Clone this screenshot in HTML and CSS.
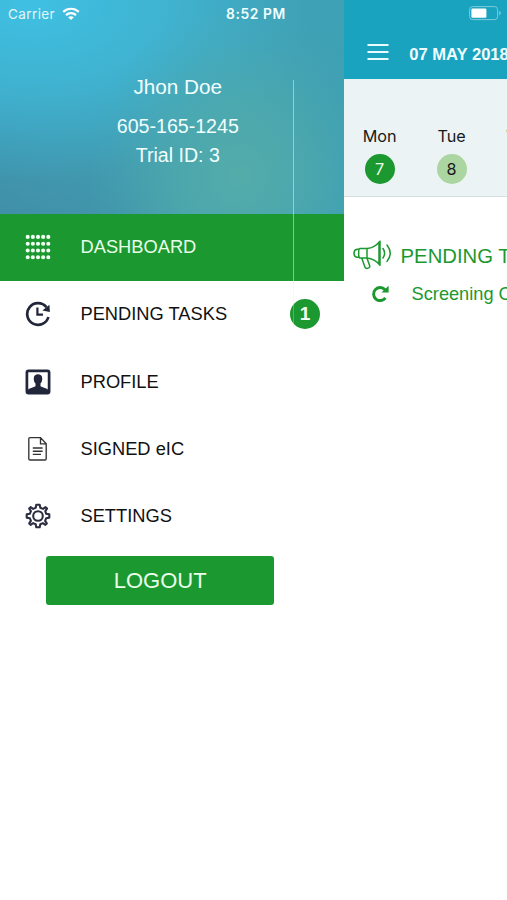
FILE: index.html
```html
<!DOCTYPE html>
<html lang="en">
<head>
<meta charset="utf-8">
<title>Dashboard</title>
<link rel="stylesheet" href="styles.css">
</head>
<body>
<div class="app">
  <aside class="drawer">
    <header class="profile">
      <div class="status">
        <span class="carrier">Carrier</span>
        <svg class="wifi" width="18" height="14" viewBox="0 0 18 14" fill="none" stroke="#fff" stroke-width="2.2"><path d="M1.2 4.9C5.6.7 12.4.7 16.8 4.9M4 8.1C6.8 5.4 11.2 5.4 14 8.1"/><path d="M9 13 6.2 10.2C7.8 8.8 10.2 8.8 11.8 10.2Z" fill="#fff" stroke="none"/></svg>
        <span class="clock">8:52 PM</span>
      </div>
      <div class="name">Jhon Doe</div>
      <div class="phone">605-165-1245</div>
      <div class="trial">Trial ID: 3</div>
    </header>
    <nav class="menu">
      <a class="item active"><svg class="icon" width="26" height="26" viewBox="0 0 26 26" fill="none" stroke="#f4fff4" stroke-width="4.1" stroke-linecap="round" stroke-dasharray="0 5.15"><path d="M2.7 2.9H24M2.7 9.7H24M2.7 16.5H24M2.7 23.3H24"/></svg><span>DASHBOARD</span></a>
      <a class="item"><svg class="icon" width="26" height="26" viewBox="0 0 26 26" fill="none" stroke="#22263a" stroke-width="2.7"><path d="M21.4 6.2A10.8 10.8 0 1 0 23.4 16"/><path d="M12.4 6.6V13.6H18" stroke-width="2.2"/><path d="M24.4 3.8 24.9 11 17.4 9.6Z" fill="#22263a" stroke="none"/></svg><span>PENDING TASKS</span><b class="badge">1</b></a>
      <a class="item"><svg class="icon" width="26" height="26" viewBox="0 0 26 26"><rect x="1.9" y="1.9" width="22.2" height="22.2" rx="1.6" fill="none" stroke="#22263a" stroke-width="2.7"/><path d="M3 23.5V20.5C5.2 19 8.6 18 10.5 17.2V14.6C8.8 12.8 8.7 10.7 8.8 8.9 8.9 6.5 10.6 5.2 13 5.2S17.1 6.5 17.2 8.9C17.3 10.7 17.2 12.8 15.5 14.6V17.2C17.4 18 20.8 19 23 20.5V23.5Z" fill="#22263a"/></svg><span>PROFILE</span></a>
      <a class="item"><svg class="icon" width="26" height="26" viewBox="0 0 26 26" fill="none" stroke="#333" stroke-width="1.35"><path d="M15.5 1.6H5Q3.8 1.6 3.8 2.8V22.8Q3.8 24 5 24H20Q21.2 24 21.2 22.8V7.8ZM15.5 1.6V7.8H21.2M7.8 12H17.6M7.8 15.2H17.6M7.8 18.4H16"/></svg><span>SIGNED eIC</span></a>
      <a class="item"><svg class="icon" width="26" height="26" viewBox="0 0 26 26" fill="none" stroke="#2b2e40" stroke-width="2.1" stroke-linejoin="round"><circle cx="13" cy="13" r="4.8"/><path d="M11.3 1.8H14.7L15.3 4.8 18 5.9 20.6 4.2 22 5.6 20.3 8.1 21.2 10.8 24.3 11.4V14.6L21.2 15.2 20.1 17.9 21.8 20.4 20.4 21.8 17.9 20.1 15.3 21.2 14.7 24.2H11.3L10.7 21.2 8.1 20.1 5.6 21.8 4.2 20.4 5.9 17.9 4.8 15.2 1.7 14.6V11.4L4.8 10.8 5.9 8.1 4.2 5.6 5.6 4.2 8.1 5.9 10.7 4.8Z"/></svg><span>SETTINGS</span></a>
    </nav>
    <button class="logout">LOGOUT</button>
    <i class="divider"></i>
  </aside>
  <main class="page">
    <header class="topbar">
      <svg class="battery" width="33" height="15" viewBox="0 0 33 15"><rect x=".6" y=".6" width="28" height="13" rx="3" fill="none" stroke="#7fcbdc"/><rect x="2.4" y="2.4" width="15" height="9.4" rx="1.2" fill="#fff"/><path d="M30.2 4.8Q33.6 7.1 30.2 9.4Z" fill="#7fcbdc"/></svg>
      <div class="titlebar">
        <svg width="22" height="18" viewBox="0 0 22 18" fill="none" stroke="#e8fbff" stroke-width="2"><path d="M.5 2H21.5M.5 9H21.5M.5 16H21.5"/></svg>
        <span>07 MAY 2018</span>
      </div>
    </header>
    <section class="week">
      <div class="day"><span>Mon</span><b class="today">7</b></div>
      <div class="day"><span>Tue</span><b>8</b></div>
      <div class="day"><span>Wed</span></div>
    </section>
    <section class="tasks">
      <h2><svg width="40" height="32" viewBox="0 0 40 32" fill="none" stroke="#1b982f" stroke-width="1.5" stroke-linejoin="round" stroke-linecap="round"><path d="M7 9.6H14C19.5 9 23.5 6.5 27 2.2V26.2C23.5 22 19.5 19.5 14 19H7C5.2 19 5.2 9.6 7 9.6ZM5.8 10.2H4Q1 10.8 1 14.2T4 18.2H5.8M8.8 19.2 12 28.2Q12.6 29.8 14.4 29.3L15.6 28.9Q17.2 28.3 16.6 26.5L14 19.2M14 9.8V19M26 4V24.4M30 9.5Q33.2 14.2 30 19M34 6Q40.5 14.2 34 22.4" /></svg><span>PENDING TASKS</span></h2>
      <div class="task"><svg width="19" height="18" viewBox="0 0 19 18"><path d="M14.4 12.8A6.5 6.5 0 1 1 14 4.8" fill="none" stroke="#1b982f" stroke-width="2.9"/><path d="M17.6.8V7.5H10.5Z" fill="#1b982f"/></svg><span>Screening Consent</span></div>
    </section>
  </main>
</div>
</body>
</html>
```
FILE: styles.css
```css
* { box-sizing: border-box; }
body { margin: 0; background: #fff; font-family: "Liberation Sans", Arial, sans-serif; overflow: hidden; }
.app { display: flex; width: 507px; height: 900px; overflow: hidden; }
svg { display: block; flex: none; }
.drawer { position: relative; width: 343.6px; flex: none; background: #fff; }
.profile {
  height: 213.5px; color: #f2ffff; text-align: center; padding-left: 12px;
  background:
    radial-gradient(ellipse 150px 170px at 240px 175px, #54acaa 0%, rgba(80,172,172,.7) 40%, rgba(75,170,178,.2) 80%, rgba(75,170,178,0) 100%),
    radial-gradient(ellipse 350px 220px at 30px 5px, #3fc0e3 0%, rgba(63,188,220,.75) 40%, rgba(63,180,205,.15) 80%, rgba(63,180,205,0) 100%),
    linear-gradient(90deg, #408ea6 0%, #4298ab 50%, #3e9fb2 100%);
}
.status { height: 28px; display: flex; align-items: center; margin-left: -12px; padding-left: 8px; font-family: Inter, sans-serif; }
.carrier { width: 54px; text-align: left; font-size: 13.5px; letter-spacing: .4px; opacity: .9; white-space: nowrap; }
.clock { margin-left: 146px; font-size: 13.8px; font-weight: 600; letter-spacing: .6px; white-space: nowrap; }
.wifi { margin-top: -1px; }
.name { margin-top: 46px; font-size: 20.7px; line-height: 25px; }
.phone { margin-top: 13px; font-size: 19.6px; line-height: 29px; }
.trial { font-size: 19.6px; line-height: 29px; }
.item { display: flex; align-items: center; height: 67.3px; padding-left: 24.6px; font-size: 18.3px; color: #111; }
.item span { margin-left: 29.9px; flex: 1; white-space: nowrap; }
.active { background: #1b982f; color: #e9ffe9; }
.badge { width: 30px; height: 30px; margin-right: 23.6px; border-radius: 50%; background: #1b982f; color: #efffef; font-size: 19px; line-height: 30px; text-align: center; }
.logout { display: block; width: 228.4px; height: 49.5px; margin: 5.9px 0 0 46px; padding: 0; border: 0; border-radius: 3px; background: #1b982f; color: #e9ffe9; font: 22px "Liberation Sans", Arial, sans-serif; }
.divider { position: absolute; left: 293px; top: 80px; width: 1px; height: 248px; background: linear-gradient(rgba(210,240,220,.55) 82%, rgba(210,240,220,.3) 82%); }
.page { flex: 1; min-width: 0; overflow: hidden; }
.topbar { height: 79px; background: #19a3be; }
.battery { margin: 0 0 0 125.4px; transform: translateY(6px); }
.titlebar { display: flex; align-items: center; gap: 20.2px; margin-top: 26px; padding-left: 23.4px; height: 22px; color: #f0fdff; font-size: 16.6px; font-weight: 700; white-space: nowrap; }
.titlebar span { padding-top: 5px; }
.week { display: flex; height: 118px; padding-top: 46px; border-bottom: 1px solid #d6dfe1; background: #ecf3f5; }
.day { width: 72px; flex: none; display: flex; flex-direction: column; align-items: center; font: 16.2px/23px Inter, sans-serif; color: #151a1a; }
.day b { width: 30px; height: 30px; margin-top: 6px; border-radius: 50%; background: #acd6a1; font-weight: 400; line-height: 30px; text-align: center; }
.day .today { background: #1b982f; color: #e9ffe9; }
.tasks { color: #1b982f; padding-top: 42px; }
.tasks h2 { display: flex; gap: 8px; margin: 0; padding-left: 9px; height: 32px; font-size: 20.3px; font-weight: 400; line-height: 34px; white-space: nowrap; }
.task { display: flex; align-items: center; gap: 21.5px; height: 24px; margin-top: 11px; padding-left: 27.5px; font-size: 18.2px; white-space: nowrap; }
```
